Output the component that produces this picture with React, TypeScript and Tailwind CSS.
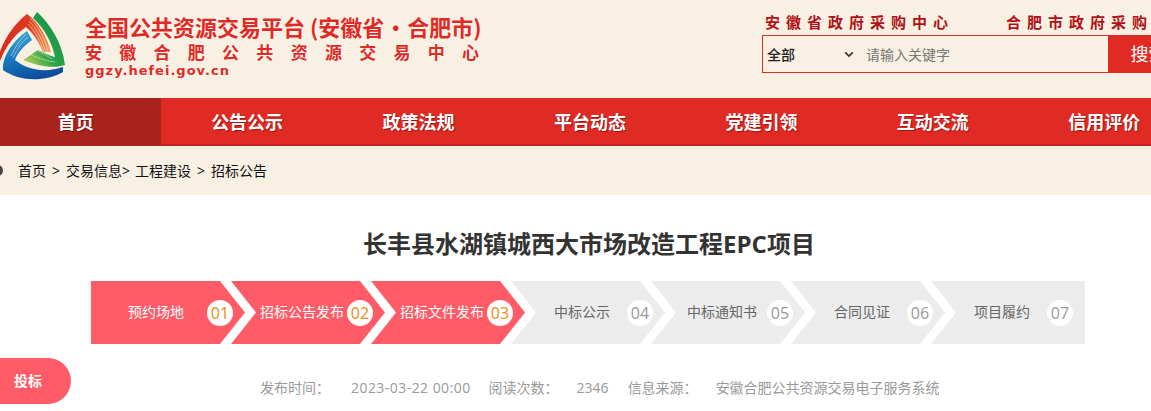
const navItems = ["首页", "公告公示", "政策法规", "平台动态", "党建引领", "互动交流", "信用评价"];

const steps = [
  { name: "预约场地", no: "01", done: true, pl: "pl-[37px]" },
  { name: "招标公告发布", no: "02", done: true, pl: "pl-[29px]" },
  { name: "招标文件发布", no: "03", done: true, pl: "pl-[29px]" },
  { name: "中标公示", no: "04", done: false, pl: "pl-[43px]" },
  { name: "中标通知书", no: "05", done: false, pl: "pl-[36px]" },
  { name: "合同见证", no: "06", done: false, pl: "pl-[43px]" },
  { name: "项目履约", no: "07", done: false, pl: "pl-[43px]" },
];

function Logo() {
  return (
    <svg viewBox="0 0 70 80" className="h-[80px] w-[70px] shrink-0">
      <defs>
        <linearGradient id="red" x1="0" y1="0.6" x2="1" y2="0.7">
          <stop offset="0" stopColor="#d92a1e" />
          <stop offset="0.55" stopColor="#dd3a1e" />
          <stop offset="1" stopColor="#eda85a" />
        </linearGradient>
        <linearGradient id="blue" x1="0.3" y1="0" x2="0.6" y2="1">
          <stop offset="0" stopColor="#3aa5d8" />
          <stop offset="0.5" stopColor="#1478bd" />
          <stop offset="1" stopColor="#0d4a97" />
        </linearGradient>
        <linearGradient id="green" x1="0.8" y1="0.2" x2="0.1" y2="0.9">
          <stop offset="0" stopColor="#14924a" />
          <stop offset="0.6" stopColor="#2ea548" />
          <stop offset="1" stopColor="#a6c957" />
        </linearGradient>
      </defs>
      <path d="M-2 58 C3 40 14 24 27 14 C38 22 47 36 51 52 L43 52 C39 42 33 33 26 27 C14 35 6 46 0 61 Z" fill="url(#red)" />
      <path d="M37 12 C50 24 62 42 65 65 C52 69 38 66 23 60 L38 50 C44 53 50 56 55 57 C52 42 44 28 33 18 Z" fill="url(#green)" />
      <path d="M27 31 L32 40 C24 46 18 52 15 60 C30 72 48 72 63 67 L63 72 C45 82 20 82 3 70 C2 56 14 40 27 31 Z" fill="url(#blue)" />
      <g fill="none" stroke="#f9f0e4" strokeWidth="0.7" opacity="0.75">
        <path d="M29 21 C37 29 42 40 46 52" />
        <path d="M28 24 C35 31 40 41 44 52" />
        <path d="M30 18 C39 27 45 39 48 52" />
        <path d="M26 34 C20 40 15 47 11 56" />
        <path d="M28 37 C22 42 17 49 13 58" />
        <path d="M30 47 C37 50 44 54 52 59" />
        <path d="M27 53 C36 57 45 61 55 62" />
      </g>
    </svg>
  );
}

export default function App() {
  return (
    <div className="relative h-[411px] w-[1151px] overflow-hidden bg-white font-['Open_Sans','Noto_Sans_CJK_SC',sans-serif] text-[14px]">
      <div className="bg-[#f9f0e4]">
        <div className="-ml-[10px] w-[1200px]">
          <header className="flex h-[98px] items-start justify-between">
            <div className="flex pl-[10px]">
              <Logo />
              <div className="ml-[15px] pt-[11px] font-['Noto_Sans_CJK_SC',sans-serif] text-[#e02a24] [text-shadow:0_0_2px_#fff]">
                <div className="text-[22px] leading-[30px] font-bold whitespace-nowrap">
                  全国公共资源交易平台 <span className="[word-spacing:-4.5px]">(安徽省 · 合肥市)</span>
                </div>
                <div className="-mt-[1px] w-[394px] text-[17px] leading-[24px] font-bold [text-align-last:justify]">安徽合肥公共资源交易中心</div>
                <div className="-mt-[2px] font-['DejaVu_Sans',sans-serif] text-[13px] leading-[18px] font-bold tracking-[1px]">ggzy.hefei.gov.cn</div>
              </div>
            </div>
            <div className="w-[428px] pt-[11px]">
              <div className="flex pl-[3px] font-['Noto_Sans_CJK_SC',serif] text-[15px] leading-[22px] font-bold text-[#b01217]">
                <span className="tracking-[6px]">安徽省政府采购中心</span>
                <span className="ml-[52px] tracking-[6px] whitespace-nowrap">合肥市政府采购网</span>
              </div>
              <div className="mt-[2px] flex h-[38px] items-center border border-[#e02a24]">
                <span className="ml-[4px] w-[77px] text-[14px] font-medium text-[#222]">全部</span>
                <svg viewBox="0 0 12 8" className="h-[7px] w-[10px] text-[#333]">
                  <path d="M1.5 1.5 6 6l4.5-4.5" fill="none" stroke="currentColor" strokeWidth="2" />
                </svg>
                <span className="ml-[12px] flex-1 text-[14px] text-[#777]">请输入关键字</span>
                <span className="flex h-full w-[81px] items-center justify-center bg-[#e02a24] text-[18px] whitespace-nowrap text-white">搜索</span>
              </div>
            </div>
          </header>

          <nav className="flex h-[48px] border-b-2 border-b-[#c0251f] bg-[#e02a24]">
            {navItems.map((item, i) => (
              <a
                key={item}
                className={`-mb-[2px] flex h-[48px] w-[171.43px] items-center justify-center pt-[1px] text-[18px] font-bold text-white [text-shadow:1px_1px_1px_rgba(90,0,0,.5)] ${i === 0 ? "bg-[#a8231c]" : ""}`}
              >
                {item}
              </a>
            ))}
          </nav>

          <div className="flex h-[49px] items-center text-[14px] text-[#111]">
            <span className="mr-[15px] h-[11px] w-[13px] rounded-full border-[3px] border-[#444]" />
            <span>首页</span>
            <span className="mx-[6px]">&gt;</span>
            <span>交易信息&gt;</span>
            <span className="ml-[5px]">工程建设</span>
            <span className="mx-[6px]">&gt;</span>
            <span>招标公告</span>
          </div>
        </div>
      </div>

      <h1 className="mt-[32px] pl-[27px] text-center text-[24px] leading-[34px] font-bold text-[#333]">
        长丰县水湖镇城西大市场改造工程EPC项目
      </h1>

      <div className="mt-[20px] ml-[91px] flex w-[994px]">
        {steps.map((s, i) => (
          <div
            key={s.no}
            className={`relative flex h-[63px] w-[154px] shrink-0 items-center pb-[2px] ${s.pl} ${i > 0 ? "-ml-[14px]" : ""} ${s.done ? "bg-[#ff5c67] text-white" : "bg-[#ececec] text-[#666]"} ${i === 0 ? "[clip-path:polygon(0_0,129px_0,100%_50%,129px_100%,0_100%)]" : i === 6 ? "[clip-path:polygon(0_0,100%_0,100%_100%,0_100%,25px_50%)]" : "[clip-path:polygon(0_0,129px_0,100%_50%,129px_100%,0_100%,25px_50%)]"}`}
          >
            <span className="text-[14px] whitespace-nowrap">{s.name}</span>
            <span
              className={`absolute top-[19px] left-[116px] flex h-[26px] w-[26px] items-center justify-center rounded-full bg-white text-[16px] ${s.done ? "text-[#ef8a12]" : "text-[#999]"}`}
            >
              {s.no}
            </span>
          </div>
        ))}
      </div>

      <div className="mt-[34px] flex h-[36px] items-start pl-[260px] text-[14px] leading-[20px] text-[#999]">
        <span>发布时间：</span>
        <span className="ml-[21px] tracking-[0.45px]">2023-03-22 00:00</span>
        <span className="ml-[18px]">阅读次数：</span>
        <span className="ml-[18px]">2346</span>
        <span className="ml-[19px]">信息来源：</span>
        <span className="ml-[18px]">安徽合肥公共资源交易电子服务系统</span>
      </div>

      <div className="absolute top-[358px] left-0 flex h-[46px] w-[71px] items-center rounded-r-[23px] bg-[#ff5c67] pb-[1px] pl-[14px] text-[14px] font-bold text-white">
        投标
      </div>
    </div>
  );
}
